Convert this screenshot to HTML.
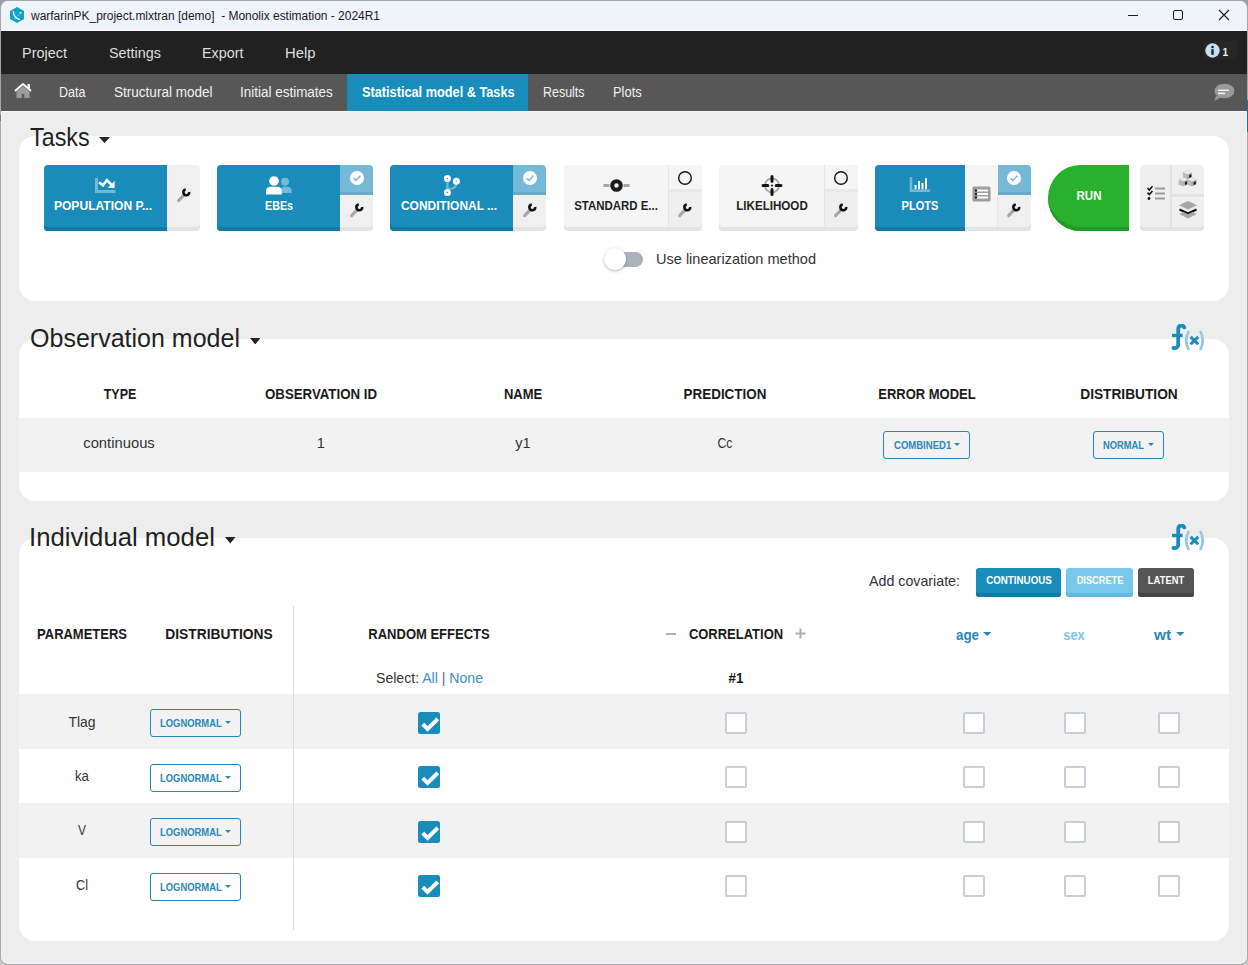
<!DOCTYPE html>
<html><head><meta charset="utf-8"><style>
html,body{margin:0;padding:0;width:1248px;height:965px;overflow:hidden;background:#a3a3ab;}
body{position:relative;font-family:"Liberation Sans",sans-serif;}
.t{position:absolute;line-height:1;white-space:nowrap;}
.r{position:absolute;display:block;}
</style></head><body>
<div class="r" style="left:0px;top:0px;width:1248px;height:40px;background:#9e9da6;"></div>
<div class="r" style="left:0px;top:40px;width:1248px;height:925px;background:#cbcbcb;"></div>
<div class="r" style="left:0px;top:0px;width:1248px;height:965px;background:#a6a6aa;border-radius:8px;"></div>
<div class="r" style="left:1px;top:1px;width:1246px;height:963px;background:#f6f6f6;border-radius:7px;"></div>
<div class="r" style="left:2px;top:2px;width:1244px;height:961px;background:#ededed;border-radius:6px;"></div>
<div class="r" style="left:1247px;top:100px;width:1px;height:32px;background:#2d63b6;"></div>
<div class="r" style="left:0px;top:115px;width:1px;height:6px;background:#6b7584;"></div>
<div class="r" style="left:1px;top:1px;width:1246px;height:30px;background:#eff3fa;border-radius:8px 8px 0 0;"></div>
<div class="r" style="left:1px;top:30px;width:1246px;height:1px;background:#fbfcfe;"></div>
<svg class="r" style="left:9px;top:6px" width="16" height="18" viewBox="0 0 16 18"><polygon points="8,1 15,5 15,13 8,17 1,13 1,5" fill="#12a2c7"/><path d="M4.3,5.2 C4.6,9.5 6,12.4 10.8,13.7" stroke="#fff" stroke-width="1.3" fill="none"/><path d="M5.5,13 L11.6,6.8" stroke="#d7f1f8" stroke-width="0.8" stroke-dasharray="1.2,0.9" fill="none"/><circle cx="11.6" cy="6.8" r="0.9" fill="#fff"/></svg>
<div class="t" style="left:30.90px;top:10.44px;font-size:12px;color:#1a1a1a;transform-origin:0 0;transform:scaleX(0.9968);">warfarinPK_project.mlxtran [demo]&nbsp; - Monolix estimation - 2024R1</div>
<div class="r" style="left:1128px;top:15px;width:10px;height:1px;background:#1a1a1a;"></div>
<div class="r" style="left:1173px;top:10px;width:10px;height:10px;border:1px solid #1a1a1a;border-radius:2px;box-sizing:border-box;"></div>
<svg class="r" style="left:1218px;top:9px" width="12" height="12" viewBox="0 0 12 12"><path d="M1,1 L11,11 M11,1 L1,11" stroke="#1a1a1a" stroke-width="1.1"/></svg>
<div class="r" style="left:1px;top:31px;width:1246px;height:43px;background:#212121;"></div>
<div class="t" style="left:21.70px;top:45.30px;font-size:15px;color:#dedede;transform-origin:0 0;transform:scaleX(0.9640);">Project</div>
<div class="t" style="left:108.60px;top:45.30px;font-size:15px;color:#dedede;transform-origin:0 0;transform:scaleX(0.9595);">Settings</div>
<div class="t" style="left:201.70px;top:45.30px;font-size:15px;color:#dedede;transform-origin:0 0;transform:scaleX(0.9573);">Export</div>
<div class="t" style="left:284.70px;top:45.30px;font-size:15px;color:#dedede;transform-origin:0 0;transform:scaleX(0.9887);">Help</div>
<div class="r" style="left:1204px;top:41px;width:33px;height:18px;background:#262626;"></div>
<svg class="r" style="left:1205px;top:43px" width="15" height="15" viewBox="0 0 15 15"><circle cx="7.5" cy="7.5" r="7.2" fill="#c4e2f3"/><circle cx="7.5" cy="4" r="1.3" fill="#222"/><rect x="6.3" y="6.2" width="2.4" height="5.6" fill="#222"/></svg>
<div class="t" style="left:1222.50px;top:47.53px;font-size:10px;font-weight:bold;color:#f2f2f2;transform-origin:0 0;">1</div>
<div class="r" style="left:1px;top:74px;width:1246px;height:37px;background:#575757;"></div>
<svg class="r" style="left:13px;top:82px" width="20" height="17" viewBox="0 0 20 17"><path d="M2,9 L10,2 L18,9" stroke="#fff" stroke-width="2" fill="none"/><rect x="14.5" y="2" width="2.5" height="5" fill="#eee"/><path d="M3.5,9.5 L10,4.2 L16.5,9.5 L16.5,16 L11.3,16 L11.3,12 L8.7,12 L8.7,16 L3.5,16 Z" fill="#9b9b9b"/></svg>
<div class="t" style="left:59.10px;top:84.75px;font-size:14px;color:#f2f2f2;transform-origin:0 0;transform:scaleX(0.8962);">Data</div>
<div class="t" style="left:113.70px;top:84.75px;font-size:14px;color:#f2f2f2;transform-origin:0 0;transform:scaleX(0.9674);">Structural model</div>
<div class="t" style="left:240.40px;top:84.75px;font-size:14px;color:#f2f2f2;transform-origin:0 0;transform:scaleX(0.9619);">Initial estimates</div>
<div class="t" style="left:542.60px;top:84.75px;font-size:14px;color:#f2f2f2;transform-origin:0 0;transform:scaleX(0.8890);">Results</div>
<div class="t" style="left:612.60px;top:84.75px;font-size:14px;color:#f2f2f2;transform-origin:0 0;transform:scaleX(0.9221);">Plots</div>
<div class="r" style="left:347px;top:74px;width:181px;height:37px;background:#198cbc;"></div>
<div class="t" style="left:361.80px;top:84.75px;font-size:14px;font-weight:bold;color:#ffffff;transform-origin:0 0;transform:scaleX(0.9095);">Statistical model &amp; Tasks</div>
<svg class="r" style="left:1213px;top:83px" width="22" height="19" viewBox="0 0 22 19"><ellipse cx="11.5" cy="8" rx="10" ry="7.3" fill="#9a9a9a"/><path d="M3,13 L1.5,18 L8,14.5 Z" fill="#9a9a9a"/><rect x="5" y="6.6" width="11" height="1.4" fill="#f4f4f4"/><rect x="5" y="9.6" width="7" height="1.6" fill="#f4f4f4"/></svg>
<div class="r" style="left:1px;top:111px;width:1245px;height:1px;background:#f8f8f8;"></div>
<div class="r" style="left:19px;top:136px;width:1210px;height:165px;background:#fff;border-radius:16px;"></div>
<div class="t" style="left:30.20px;top:124.83px;font-size:25px;color:#1f1f1f;transform-origin:0 0;transform:scaleX(0.9327);">Tasks</div>
<svg class="r" style="left:99px;top:137px" width="11" height="6" viewBox="0 0 11 6"><polygon points="0,0 11,0 5.5,6" fill="#222"/></svg>
<div class="r" style="left:44px;top:165px;width:123px;height:66px;background:#198cbc;border-radius:4px 0 0 4px;box-shadow:inset 0 -4px 0 #137aa6;"></div>
<div class="r" style="left:167px;top:165px;width:33px;height:66px;background:#f0f0f0;border-radius:0 4px 4px 0;box-shadow:inset 0 -4px 0 #e3e3e3;"></div>
<svg class="r" style="left:174.5px;top:186px" width="18" height="18" viewBox="0 0 18 18"><path d="M3.6,14.6 L8.4,9.6" stroke="#a6a6a6" stroke-width="3" stroke-linecap="round"/><circle cx="11.3" cy="6.4" r="2.9" fill="none" stroke="#111" stroke-width="2.6" stroke-dasharray="13.2 5" transform="rotate(-8 11.3 6.4)"/></svg>
<div class="t" style="left:-196.65px;width:600px;text-align:center;top:198.99px;font-size:13px;font-weight:bold;color:#fff;transform-origin:50% 0;transform:scaleX(0.9281);">POPULATION P...</div>
<svg class="r" style="left:94px;top:177px" width="22" height="17" viewBox="0 0 22 17"><path d="M2.5,1 L2.5,14.5 L21.5,14.5" stroke="#76b8d7" stroke-width="3" fill="none"/><path d="M5,5.2 L9,8.4 L12.9,3.2 L17.8,8.2" stroke="#fff" stroke-width="2.6" fill="none"/><polygon points="13.6,10.9 20.7,10.9 20.7,3.8" fill="#fff"/></svg>
<div class="r" style="left:217px;top:165px;width:123px;height:66px;background:#198cbc;border-radius:4px 0 0 4px;box-shadow:inset 0 -4px 0 #137aa6;"></div>
<div class="r" style="left:340px;top:165px;width:33px;height:30px;background:#76b8d7;border-radius:0 4px 0 0;box-shadow:inset 0 -3px 0 #6aaac8;"></div>
<svg class="r" style="left:348.5px;top:170px" width="16" height="16" viewBox="0 0 16 16"><circle cx="8" cy="8" r="7" fill="#fff"/><path d="M4.6,8.2 L7,10.4 L11.4,5.8" stroke="#76b8d7" stroke-width="1.5" fill="none"/></svg>
<div class="r" style="left:340px;top:195px;width:33px;height:36px;background:#f0f0f0;border-radius:0 0 4px 0;box-shadow:inset 0 -4px 0 #e3e3e3;"></div>
<svg class="r" style="left:347.5px;top:201px" width="18" height="18" viewBox="0 0 18 18"><path d="M3.6,14.6 L8.4,9.6" stroke="#a6a6a6" stroke-width="3" stroke-linecap="round"/><circle cx="11.3" cy="6.4" r="2.9" fill="none" stroke="#111" stroke-width="2.6" stroke-dasharray="13.2 5" transform="rotate(-8 11.3 6.4)"/></svg>
<div class="t" style="left:-21.00px;width:600px;text-align:center;top:198.99px;font-size:13px;font-weight:bold;color:#fff;transform-origin:50% 0;transform:scaleX(0.8215);">EBEs</div>
<svg class="r" style="left:264px;top:174px" width="30" height="22" viewBox="0 0 30 22"><circle cx="21" cy="7.7" r="4" fill="#76b8d7"/><path d="M17,19 L17,15.5 Q17,12.5 21,12.5 Q27.7,12.5 27.7,16.5 L27.7,19 Z" fill="#76b8d7"/><circle cx="10" cy="7" r="4.8" fill="#fff"/><path d="M2,20.4 L2,16.5 Q2,12.7 7,12.7 L13,12.7 Q17.8,12.7 17.8,16.5 L17.8,20.4 Z" fill="#fff"/></svg>
<div class="r" style="left:390px;top:165px;width:123px;height:66px;background:#198cbc;border-radius:4px 0 0 4px;box-shadow:inset 0 -4px 0 #137aa6;"></div>
<div class="r" style="left:513px;top:165px;width:33px;height:30px;background:#76b8d7;border-radius:0 4px 0 0;box-shadow:inset 0 -3px 0 #6aaac8;"></div>
<svg class="r" style="left:521.5px;top:170px" width="16" height="16" viewBox="0 0 16 16"><circle cx="8" cy="8" r="7" fill="#fff"/><path d="M4.6,8.2 L7,10.4 L11.4,5.8" stroke="#76b8d7" stroke-width="1.5" fill="none"/></svg>
<div class="r" style="left:513px;top:195px;width:33px;height:36px;background:#f0f0f0;border-radius:0 0 4px 0;box-shadow:inset 0 -4px 0 #e3e3e3;"></div>
<svg class="r" style="left:520.5px;top:201px" width="18" height="18" viewBox="0 0 18 18"><path d="M3.6,14.6 L8.4,9.6" stroke="#a6a6a6" stroke-width="3" stroke-linecap="round"/><circle cx="11.3" cy="6.4" r="2.9" fill="none" stroke="#111" stroke-width="2.6" stroke-dasharray="13.2 5" transform="rotate(-8 11.3 6.4)"/></svg>
<div class="t" style="left:148.75px;width:600px;text-align:center;top:198.99px;font-size:13px;font-weight:bold;color:#fff;transform-origin:50% 0;transform:scaleX(0.9188);">CONDITIONAL ...</div>
<svg class="r" style="left:440px;top:172px" width="22" height="26" viewBox="0 0 22 26"><path d="M7.4,9 L7.4,16.5 Q7.4,17 12,16.5 Q16.4,15.8 16.4,10" stroke="#76b8d7" stroke-width="2.2" fill="none"/><circle cx="7.4" cy="6.5" r="3.5" fill="#fff"/><circle cx="16.4" cy="9.2" r="3.5" fill="#fff"/><circle cx="7.4" cy="20.4" r="3.5" fill="#fff"/><circle cx="7.4" cy="6.5" r="0.7" fill="#4a6fd0"/><circle cx="7.4" cy="20.4" r="0.7" fill="#4a6fd0"/><circle cx="16.4" cy="9.2" r="0.7" fill="#62b9e6"/></svg>
<div class="r" style="left:564px;top:165px;width:104px;height:66px;background:#f5f5f5;border-radius:4px 0 0 4px;box-shadow:inset 0 -4px 0 #e3e3e3;"></div>
<div class="r" style="left:668px;top:165px;width:34px;height:66px;background:#efefef;border-radius:0 4px 4px 0;box-shadow:inset 0 -4px 0 #e3e3e3;"></div>
<div class="r" style="left:668px;top:165px;width:34px;height:27px;background:#f5f5f5;border-radius:0 4px 0 0;box-shadow:inset 0 -3px 0 #e9e9e9;"></div>
<div class="r" style="left:668px;top:165px;width:1px;height:62px;background:#e6e6e6;"></div>
<svg class="r" style="left:677.0px;top:169.6px" width="16" height="16" viewBox="0 0 16 16"><circle cx="8" cy="8" r="6.3" fill="none" stroke="#151515" stroke-width="1.4"/></svg>
<svg class="r" style="left:676.0px;top:201px" width="18" height="18" viewBox="0 0 18 18"><path d="M3.6,14.6 L8.4,9.6" stroke="#a6a6a6" stroke-width="3" stroke-linecap="round"/><circle cx="11.3" cy="6.4" r="2.9" fill="none" stroke="#111" stroke-width="2.6" stroke-dasharray="13.2 5" transform="rotate(-8 11.3 6.4)"/></svg>
<div class="t" style="left:316.35px;width:600px;text-align:center;top:198.99px;font-size:13px;font-weight:bold;color:#1f1f1f;transform-origin:50% 0;transform:scaleX(0.8802);">STANDARD E...</div>
<svg class="r" style="left:603px;top:178px" width="27" height="15" viewBox="0 0 27 15"><rect x="0.5" y="6" width="6" height="3" fill="#a3a3a3"/><rect x="20.5" y="6" width="6" height="3" fill="#a3a3a3"/><circle cx="13.5" cy="7.5" r="6.3" fill="#1b1b1b"/><circle cx="13.5" cy="7.5" r="2.2" fill="#f5f5f5"/></svg>
<div class="r" style="left:719px;top:165px;width:105px;height:66px;background:#f5f5f5;border-radius:4px 0 0 4px;box-shadow:inset 0 -4px 0 #e3e3e3;"></div>
<div class="r" style="left:824px;top:165px;width:34px;height:66px;background:#efefef;border-radius:0 4px 4px 0;box-shadow:inset 0 -4px 0 #e3e3e3;"></div>
<div class="r" style="left:824px;top:165px;width:34px;height:27px;background:#f5f5f5;border-radius:0 4px 0 0;box-shadow:inset 0 -3px 0 #e9e9e9;"></div>
<div class="r" style="left:824px;top:165px;width:1px;height:62px;background:#e6e6e6;"></div>
<svg class="r" style="left:833.0px;top:169.6px" width="16" height="16" viewBox="0 0 16 16"><circle cx="8" cy="8" r="6.3" fill="none" stroke="#151515" stroke-width="1.4"/></svg>
<svg class="r" style="left:832.0px;top:201px" width="18" height="18" viewBox="0 0 18 18"><path d="M3.6,14.6 L8.4,9.6" stroke="#a6a6a6" stroke-width="3" stroke-linecap="round"/><circle cx="11.3" cy="6.4" r="2.9" fill="none" stroke="#111" stroke-width="2.6" stroke-dasharray="13.2 5" transform="rotate(-8 11.3 6.4)"/></svg>
<div class="t" style="left:472.20px;width:600px;text-align:center;top:198.99px;font-size:13px;font-weight:bold;color:#1f1f1f;transform-origin:50% 0;transform:scaleX(0.8932);">LIKELIHOOD</div>
<svg class="r" style="left:760px;top:173px" width="24" height="25" viewBox="0 0 24 25"><circle cx="12" cy="12.4" r="7" fill="none" stroke="#a6a6a6" stroke-width="1.9"/><path d="M12,3.4 L12,8.2 M12,16.6 L12,21.6 M3,12.4 L7.8,12.4 M16.2,12.4 L21,12.4" stroke="#111" stroke-width="3" stroke-linecap="round"/><circle cx="12" cy="12.4" r="1" fill="#111"/></svg>
<div class="r" style="left:875px;top:165px;width:90px;height:66px;background:#198cbc;border-radius:4px 0 0 4px;box-shadow:inset 0 -4px 0 #137aa6;"></div>
<div class="r" style="left:965px;top:165px;width:33px;height:66px;background:#f5f5f5;box-shadow:inset 0 -4px 0 #e3e3e3;"></div>
<div class="r" style="left:998px;top:165px;width:33px;height:30px;background:#76b8d7;border-radius:0 4px 0 0;box-shadow:inset 0 -3px 0 #6aaac8;"></div>
<div class="r" style="left:998px;top:195px;width:33px;height:36px;background:#f0f0f0;border-radius:0 0 4px 0;box-shadow:inset 0 -4px 0 #e3e3e3;"></div>
<div class="r" style="left:997px;top:195px;width:1px;height:32px;background:#e6e6e6;"></div>
<svg class="r" style="left:1006px;top:170px" width="16" height="16" viewBox="0 0 16 16"><circle cx="8" cy="8" r="7" fill="#fff"/><path d="M4.6,8.2 L7,10.4 L11.4,5.8" stroke="#76b8d7" stroke-width="1.5" fill="none"/></svg>
<svg class="r" style="left:1005px;top:201px" width="18" height="18" viewBox="0 0 18 18"><path d="M3.6,14.6 L8.4,9.6" stroke="#a6a6a6" stroke-width="3" stroke-linecap="round"/><circle cx="11.3" cy="6.4" r="2.9" fill="none" stroke="#111" stroke-width="2.6" stroke-dasharray="13.2 5" transform="rotate(-8 11.3 6.4)"/></svg>
<div class="t" style="left:620.40px;width:600px;text-align:center;top:198.99px;font-size:13px;font-weight:bold;color:#fff;transform-origin:50% 0;transform:scaleX(0.8492);">PLOTS</div>
<svg class="r" style="left:908px;top:176px" width="24" height="18" viewBox="0 0 24 18"><path d="M3,1 L3,14.8 L22,14.8" stroke="#76b8d7" stroke-width="2.6" fill="none"/><rect x="6.5" y="9" width="2" height="4.3" fill="#fff"/><rect x="10" y="5" width="2" height="8.3" fill="#fff"/><rect x="13.5" y="7" width="2" height="6.3" fill="#fff"/><rect x="17" y="2.2" width="2" height="11.1" fill="#fff"/></svg>
<svg class="r" style="left:972px;top:186px" width="19" height="16" viewBox="0 0 19 16"><rect x="0.5" y="0.5" width="18" height="15" rx="1.5" fill="#9c9c9c"/><rect x="4" y="3.5" width="12" height="2" fill="#fff"/><rect x="4" y="7" width="12" height="2" fill="#fff"/><rect x="4" y="10.5" width="12" height="2" fill="#fff"/><circle cx="4" cy="4.5" r="1.2" fill="#222"/><circle cx="4" cy="8" r="1.2" fill="#222"/><circle cx="4" cy="11.5" r="1.2" fill="#222"/></svg>
<div class="r" style="left:1048px;top:165px;width:81px;height:66px;background:#29b12e;border-radius:32px 0 0 32px / 33px 0 0 33px;box-shadow:inset 0 -4px 0 #219b27;"></div>
<div class="t" style="left:789.00px;width:600px;text-align:center;top:190.02px;font-size:12.5px;font-weight:bold;color:#fff;transform-origin:50% 0;transform:scaleX(0.9231);">RUN</div>
<div class="r" style="left:1140px;top:165px;width:64px;height:66px;background:#efefef;border-radius:4px;box-shadow:inset 0 -4px 0 #e3e3e3;"></div>
<div class="r" style="left:1170px;top:165px;width:2px;height:62px;background:#e2e2e2;"></div>
<div class="r" style="left:1172px;top:194px;width:32px;height:3px;background:#e2e2e2;"></div>
<svg class="r" style="left:1146px;top:185px" width="20" height="18" viewBox="0 0 20 18"><path d="M1.5,3 L3.3,5 L6.5,1.3 M1.5,7.6 L3.3,9.6 L6.5,5.9" stroke="#151515" stroke-width="1.6" fill="none"/><circle cx="3" cy="13.5" r="1.4" fill="#151515"/><rect x="9" y="2.5" width="10" height="2" fill="#9b9b9b"/><rect x="9" y="7.5" width="10" height="2" fill="#9b9b9b"/><rect x="9" y="12.5" width="10" height="2" fill="#9b9b9b"/></svg>
<svg class="r" style="left:1178px;top:169px" width="20" height="19" viewBox="0 0 20 19"><g transform="translate(5,1.3)"><path d="M0,2.2 L4.5,0 L9,2.2 L9,7.3 L4.5,9 L0,7.3 Z" fill="#a9a9a9"/><path d="M0,2.2 L4.5,0 L9,2.2 L4.5,4.2 Z" fill="#ebebeb"/><path d="M0,2.2 L4.5,4.2 L4.5,9 L0,7.3 Z" fill="#b9b9b9"/><path d="M6.2,5 L8.3,4 L8.3,6.8 L6.2,7.8 Z" fill="#151515"/></g><g transform="translate(0.8,8.2)"><path d="M0,2.2 L4.5,0 L9,2.2 L9,7.3 L4.5,9 L0,7.3 Z" fill="#a9a9a9"/><path d="M0,2.2 L4.5,0 L9,2.2 L4.5,4.2 Z" fill="#ebebeb"/><path d="M0,2.2 L4.5,4.2 L4.5,9 L0,7.3 Z" fill="#b9b9b9"/><path d="M6.2,5 L8.3,4 L8.3,6.8 L6.2,7.8 Z" fill="#151515"/></g><g transform="translate(9.5,8.2)"><path d="M0,2.2 L4.5,0 L9,2.2 L9,7.3 L4.5,9 L0,7.3 Z" fill="#a9a9a9"/><path d="M0,2.2 L4.5,0 L9,2.2 L4.5,4.2 Z" fill="#ebebeb"/><path d="M0,2.2 L4.5,4.2 L4.5,9 L0,7.3 Z" fill="#b9b9b9"/><path d="M6.2,5 L8.3,4 L8.3,6.8 L6.2,7.8 Z" fill="#151515"/></g></svg>
<svg class="r" style="left:1178px;top:200px" width="20" height="20" viewBox="0 0 20 20"><polygon points="10,1 19,5.3 10,9.6 1,5.3" fill="#a5a5a5"/><path d="M1.5,9.4 L10,13.6 L18.5,9.4" stroke="#151515" stroke-width="2.2" fill="none"/><polygon points="1,14 10,18.6 19,14 14.5,12 10,14.2 5.5,12" fill="#a8a8a8"/></svg>
<div class="r" style="left:608px;top:252px;width:35px;height:15px;background:#aab2bb;border-radius:8px;"></div>
<div class="r" style="left:604px;top:248px;width:22px;height:22px;background:#fff;border-radius:50%;box-shadow:0 1px 3px rgba(0,0,0,0.3);"></div>
<div class="t" style="left:656.30px;top:252.47px;font-size:14.8px;color:#333;transform-origin:0 0;transform:scaleX(0.9823);">Use linearization method</div>
<div class="r" style="left:19px;top:339px;width:1210px;height:162px;background:#fff;border-radius:16px;"></div>
<div class="t" style="left:30.20px;top:326.03px;font-size:25px;color:#1f1f1f;transform-origin:0 0;transform:scaleX(1.0009);">Observation model</div>
<svg class="r" style="left:249.6px;top:337.6px" width="10.5" height="6.5" viewBox="0 0 10.5 6.5"><polygon points="0,0 10.5,0 5.25,6.5" fill="#222"/></svg>
<svg class="r" style="left:1171px;top:323.5px" width="38" height="30" viewBox="0 0 38 30"><path d="M13.2,3.4 Q12.6,1.6 10.4,1.6 Q7.2,1.6 7.2,5.8 L7.2,20.2 Q7.2,24.4 2.4,24" stroke="#198cbc" stroke-width="3.8" fill="none" stroke-linecap="round"/><rect x="1" y="9.8" width="10.6" height="3.3" fill="#198cbc"/><path d="M17.4,8 Q12.9,16.6 17.4,25.2 M29.6,8 Q34.1,16.6 29.6,25.2" stroke="#93c8e0" stroke-width="2.6" fill="none" stroke-linecap="round"/><path d="M19.6,12.9 L27.2,20.3 M27.2,12.9 L19.6,20.3" stroke="#198cbc" stroke-width="3"/></svg>
<div class="t" style="left:-180.40px;width:600px;text-align:center;top:387.09px;font-size:14.3px;font-weight:bold;color:#1a1a1a;transform-origin:50% 0;transform:scaleX(0.8728);">TYPE</div>
<div class="t" style="left:21.35px;width:600px;text-align:center;top:387.09px;font-size:14.3px;font-weight:bold;color:#1a1a1a;transform-origin:50% 0;transform:scaleX(0.9274);">OBSERVATION ID</div>
<div class="t" style="left:223.10px;width:600px;text-align:center;top:387.09px;font-size:14.3px;font-weight:bold;color:#1a1a1a;transform-origin:50% 0;transform:scaleX(0.9073);">NAME</div>
<div class="t" style="left:424.90px;width:600px;text-align:center;top:387.09px;font-size:14.3px;font-weight:bold;color:#1a1a1a;transform-origin:50% 0;transform:scaleX(0.9389);">PREDICTION</div>
<div class="t" style="left:626.65px;width:600px;text-align:center;top:387.09px;font-size:14.3px;font-weight:bold;color:#1a1a1a;transform-origin:50% 0;transform:scaleX(0.9091);">ERROR MODEL</div>
<div class="t" style="left:828.55px;width:600px;text-align:center;top:387.09px;font-size:14.3px;font-weight:bold;color:#1a1a1a;transform-origin:50% 0;transform:scaleX(0.9589);">DISTRIBUTION</div>
<div class="r" style="left:19px;top:418px;width:1210px;height:54px;background:#f2f2f2;"></div>
<div class="t" style="left:-180.55px;width:600px;text-align:center;top:436.14px;font-size:14.6px;color:#333;transform-origin:50% 0;transform:scaleX(1.0125);">continuous</div>
<div class="t" style="left:20.80px;width:600px;text-align:center;top:436.14px;font-size:14.6px;color:#333;transform-origin:50% 0;">1</div>
<div class="t" style="left:222.90px;width:600px;text-align:center;top:436.14px;font-size:14.6px;color:#333;transform-origin:50% 0;">y1</div>
<div class="t" style="left:425.10px;width:600px;text-align:center;top:436.24px;font-size:14.6px;color:#333;transform-origin:50% 0;transform:scaleX(0.8406);">Cc</div>
<div class="r" style="left:883px;top:431px;width:87px;height:28px;border:1px solid #2586b5;border-radius:3px;box-sizing:border-box;"></div>
<div class="t" style="left:893.70px;top:441.13px;font-size:10px;font-weight:bold;color:#2a88b6;transform-origin:0 0;transform:scaleX(0.9533);">COMBINED1</div>
<svg class="r" style="left:954px;top:443px" width="6" height="3" viewBox="0 0 6 3"><polygon points="0,0 6,0 3.0,3" fill="#2a88b6"/></svg>
<div class="r" style="left:1093px;top:431px;width:71px;height:28px;border:1px solid #2586b5;border-radius:3px;box-sizing:border-box;"></div>
<div class="t" style="left:1103.00px;top:441.13px;font-size:10px;font-weight:bold;color:#2a88b6;transform-origin:0 0;transform:scaleX(0.9343);">NORMAL</div>
<svg class="r" style="left:1148px;top:443px" width="6" height="3" viewBox="0 0 6 3"><polygon points="0,0 6,0 3.0,3" fill="#2a88b6"/></svg>
<div class="r" style="left:19px;top:538px;width:1210px;height:403px;background:#fff;border-radius:16px;"></div>
<div class="t" style="left:28.60px;top:524.87px;font-size:25.9px;color:#1f1f1f;transform-origin:0 0;transform:scaleX(0.9938);">Individual model</div>
<svg class="r" style="left:225px;top:537px" width="10.5" height="6.5" viewBox="0 0 10.5 6.5"><polygon points="0,0 10.5,0 5.25,6.5" fill="#222"/></svg>
<svg class="r" style="left:1171px;top:524px" width="38" height="30" viewBox="0 0 38 30"><path d="M13.2,3.4 Q12.6,1.6 10.4,1.6 Q7.2,1.6 7.2,5.8 L7.2,20.2 Q7.2,24.4 2.4,24" stroke="#198cbc" stroke-width="3.8" fill="none" stroke-linecap="round"/><rect x="1" y="9.8" width="10.6" height="3.3" fill="#198cbc"/><path d="M17.4,8 Q12.9,16.6 17.4,25.2 M29.6,8 Q34.1,16.6 29.6,25.2" stroke="#93c8e0" stroke-width="2.6" fill="none" stroke-linecap="round"/><path d="M19.6,12.9 L27.2,20.3 M27.2,12.9 L19.6,20.3" stroke="#198cbc" stroke-width="3"/></svg>
<div class="t" style="left:868.70px;top:573.64px;font-size:14.6px;color:#333;transform-origin:0 0;transform:scaleX(0.9751);">Add covariate:</div>
<div class="r" style="left:976px;top:568px;width:85px;height:29px;background:#198cbc;border-radius:3px;box-shadow:inset 0 -4px 0 #137aa6;"></div>
<div class="t" style="left:718.80px;width:600px;text-align:center;top:575.11px;font-size:10.5px;font-weight:bold;color:#fff;transform-origin:50% 0;transform:scaleX(0.9308);">CONTINUOUS</div>
<div class="r" style="left:1066px;top:568px;width:67px;height:29px;background:#78c8eb;border-radius:3px;box-shadow:inset 0 -4px 0 #62bbe5;"></div>
<div class="t" style="left:799.70px;width:600px;text-align:center;top:575.11px;font-size:10.5px;font-weight:bold;color:#ffffff;transform-origin:50% 0;transform:scaleX(0.8796);">DISCRETE</div>
<div class="r" style="left:1138px;top:568px;width:56px;height:29px;background:#555555;border-radius:3px;box-shadow:inset 0 -4px 0 #454545;"></div>
<div class="t" style="left:865.85px;width:600px;text-align:center;top:575.11px;font-size:10.5px;font-weight:bold;color:#fff;transform-origin:50% 0;transform:scaleX(0.8934);">LATENT</div>
<div class="t" style="left:-218.30px;width:600px;text-align:center;top:626.89px;font-size:14.3px;font-weight:bold;color:#1a1a1a;transform-origin:50% 0;transform:scaleX(0.9066);">PARAMETERS</div>
<div class="t" style="left:-81.30px;width:600px;text-align:center;top:626.89px;font-size:14.3px;font-weight:bold;color:#1a1a1a;transform-origin:50% 0;transform:scaleX(0.9656);">DISTRIBUTIONS</div>
<div class="t" style="left:129.30px;width:600px;text-align:center;top:626.89px;font-size:14.3px;font-weight:bold;color:#1a1a1a;transform-origin:50% 0;transform:scaleX(0.9096);">RANDOM EFFECTS</div>
<div class="r" style="left:666px;top:633px;width:10px;height:2px;background:#b0b0b0;"></div>
<div class="t" style="left:436.10px;width:600px;text-align:center;top:626.89px;font-size:14.3px;font-weight:bold;color:#1a1a1a;transform-origin:50% 0;transform:scaleX(0.9075);">CORRELATION</div>
<svg class="r" style="left:795px;top:628px" width="11" height="11" viewBox="0 0 11 11"><path d="M5.5,0.5 L5.5,10.5 M0.5,5.5 L10.5,5.5" stroke="#b0b0b0" stroke-width="2"/></svg>
<div class="t" style="left:956.00px;top:627.89px;font-size:14.3px;font-weight:bold;color:#2a88b6;transform-origin:0 0;transform:scaleX(0.9335);">age</div>
<svg class="r" style="left:983px;top:632px" width="8.5" height="4" viewBox="0 0 8.5 4"><polygon points="0,0 8.5,0 4.25,4" fill="#2a88b6"/></svg>
<div class="t" style="left:774.40px;width:600px;text-align:center;top:627.89px;font-size:14.3px;font-weight:bold;color:#7cc3e8;transform-origin:50% 0;transform:scaleX(0.9054);">sex</div>
<div class="t" style="left:1154.00px;top:627.89px;font-size:14.3px;font-weight:bold;color:#2a88b6;transform-origin:0 0;transform:scaleX(1.0702);">wt</div>
<svg class="r" style="left:1175.5px;top:632px" width="8.5" height="4" viewBox="0 0 8.5 4"><polygon points="0,0 8.5,0 4.25,4" fill="#2a88b6"/></svg>
<div class="t" style="left:375.80px;top:671.02px;font-size:14.5px;color:#333;transform-origin:0 0;transform:scaleX(0.9713);">Select: <span style="color:#3d8fc4">All</span> <span style="color:#666">|</span> <span style="color:#3d8fc4">None</span></div>
<div class="t" style="left:435.90px;width:600px;text-align:center;top:671.45px;font-size:14px;font-weight:bold;color:#1a1a1a;transform-origin:50% 0;transform:scaleX(0.9634);">#1</div>
<div class="r" style="left:19px;top:694px;width:1210px;height:55px;background:#f2f2f2;"></div>
<div class="r" style="left:19px;top:803px;width:1210px;height:55px;background:#f2f2f2;"></div>
<div class="t" style="left:-218.30px;width:600px;text-align:center;top:714.64px;font-size:14.6px;color:#333;transform-origin:50% 0;transform:scaleX(0.9507);">Tlag</div>
<div class="r" style="left:150px;top:709px;width:91px;height:28px;border:1px solid #2586b5;border-radius:3px;box-sizing:border-box;"></div>
<div class="t" style="left:160.30px;top:719.33px;font-size:10px;font-weight:bold;color:#2a88b6;transform-origin:0 0;transform:scaleX(0.9413);">LOGNORMAL</div>
<svg class="r" style="left:225px;top:721px" width="6" height="3" viewBox="0 0 6 3"><polygon points="0,0 6,0 3.0,3" fill="#2a88b6"/></svg>
<svg class="r" style="left:418px;top:712px" width="22" height="22" viewBox="0 0 22 22"><rect x="0" y="0" width="22" height="22" rx="2.5" fill="#198cbc"/><path d="M4.8,12.2 L9.6,17 L19.8,6.8" stroke="#fff" stroke-width="4" fill="none"/></svg>
<div class="r" style="left:725px;top:712px;width:22px;height:22px;background:#fff;border:2px solid #c9cfd8;border-radius:2px;box-sizing:border-box;"></div>
<div class="r" style="left:963px;top:712px;width:22px;height:22px;background:#fff;border:2px solid #c9cfd8;border-radius:2px;box-sizing:border-box;"></div>
<div class="r" style="left:1064px;top:712px;width:22px;height:22px;background:#fff;border:2px solid #c9cfd8;border-radius:2px;box-sizing:border-box;"></div>
<div class="r" style="left:1158px;top:712px;width:22px;height:22px;background:#fff;border:2px solid #c9cfd8;border-radius:2px;box-sizing:border-box;"></div>
<div class="t" style="left:-218.30px;width:600px;text-align:center;top:768.94px;font-size:14.6px;color:#333;transform-origin:50% 0;transform:scaleX(0.9080);">ka</div>
<div class="r" style="left:150px;top:764px;width:91px;height:28px;border:1px solid #2586b5;border-radius:3px;box-sizing:border-box;"></div>
<div class="t" style="left:160.30px;top:774.33px;font-size:10px;font-weight:bold;color:#2a88b6;transform-origin:0 0;transform:scaleX(0.9413);">LOGNORMAL</div>
<svg class="r" style="left:225px;top:776px" width="6" height="3" viewBox="0 0 6 3"><polygon points="0,0 6,0 3.0,3" fill="#2a88b6"/></svg>
<svg class="r" style="left:418px;top:766px" width="22" height="22" viewBox="0 0 22 22"><rect x="0" y="0" width="22" height="22" rx="2.5" fill="#198cbc"/><path d="M4.8,12.2 L9.6,17 L19.8,6.8" stroke="#fff" stroke-width="4" fill="none"/></svg>
<div class="r" style="left:725px;top:766px;width:22px;height:22px;background:#fff;border:2px solid #c9cfd8;border-radius:2px;box-sizing:border-box;"></div>
<div class="r" style="left:963px;top:766px;width:22px;height:22px;background:#fff;border:2px solid #c9cfd8;border-radius:2px;box-sizing:border-box;"></div>
<div class="r" style="left:1064px;top:766px;width:22px;height:22px;background:#fff;border:2px solid #c9cfd8;border-radius:2px;box-sizing:border-box;"></div>
<div class="r" style="left:1158px;top:766px;width:22px;height:22px;background:#fff;border:2px solid #c9cfd8;border-radius:2px;box-sizing:border-box;"></div>
<div class="t" style="left:-218.30px;width:600px;text-align:center;top:823.44px;font-size:14.6px;color:#333;transform-origin:50% 0;transform:scaleX(0.8215);">V</div>
<div class="r" style="left:150px;top:818px;width:91px;height:28px;border:1px solid #2586b5;border-radius:3px;box-sizing:border-box;"></div>
<div class="t" style="left:160.30px;top:828.33px;font-size:10px;font-weight:bold;color:#2a88b6;transform-origin:0 0;transform:scaleX(0.9413);">LOGNORMAL</div>
<svg class="r" style="left:225px;top:830px" width="6" height="3" viewBox="0 0 6 3"><polygon points="0,0 6,0 3.0,3" fill="#2a88b6"/></svg>
<svg class="r" style="left:418px;top:821px" width="22" height="22" viewBox="0 0 22 22"><rect x="0" y="0" width="22" height="22" rx="2.5" fill="#198cbc"/><path d="M4.8,12.2 L9.6,17 L19.8,6.8" stroke="#fff" stroke-width="4" fill="none"/></svg>
<div class="r" style="left:725px;top:821px;width:22px;height:22px;background:#fff;border:2px solid #c9cfd8;border-radius:2px;box-sizing:border-box;"></div>
<div class="r" style="left:963px;top:821px;width:22px;height:22px;background:#fff;border:2px solid #c9cfd8;border-radius:2px;box-sizing:border-box;"></div>
<div class="r" style="left:1064px;top:821px;width:22px;height:22px;background:#fff;border:2px solid #c9cfd8;border-radius:2px;box-sizing:border-box;"></div>
<div class="r" style="left:1158px;top:821px;width:22px;height:22px;background:#fff;border:2px solid #c9cfd8;border-radius:2px;box-sizing:border-box;"></div>
<div class="t" style="left:-218.30px;width:600px;text-align:center;top:877.64px;font-size:14.6px;color:#333;transform-origin:50% 0;transform:scaleX(0.8703);">Cl</div>
<div class="r" style="left:150px;top:873px;width:91px;height:28px;border:1px solid #2586b5;border-radius:3px;box-sizing:border-box;"></div>
<div class="t" style="left:160.30px;top:883.33px;font-size:10px;font-weight:bold;color:#2a88b6;transform-origin:0 0;transform:scaleX(0.9413);">LOGNORMAL</div>
<svg class="r" style="left:225px;top:885px" width="6" height="3" viewBox="0 0 6 3"><polygon points="0,0 6,0 3.0,3" fill="#2a88b6"/></svg>
<svg class="r" style="left:418px;top:875px" width="22" height="22" viewBox="0 0 22 22"><rect x="0" y="0" width="22" height="22" rx="2.5" fill="#198cbc"/><path d="M4.8,12.2 L9.6,17 L19.8,6.8" stroke="#fff" stroke-width="4" fill="none"/></svg>
<div class="r" style="left:725px;top:875px;width:22px;height:22px;background:#fff;border:2px solid #c9cfd8;border-radius:2px;box-sizing:border-box;"></div>
<div class="r" style="left:963px;top:875px;width:22px;height:22px;background:#fff;border:2px solid #c9cfd8;border-radius:2px;box-sizing:border-box;"></div>
<div class="r" style="left:1064px;top:875px;width:22px;height:22px;background:#fff;border:2px solid #c9cfd8;border-radius:2px;box-sizing:border-box;"></div>
<div class="r" style="left:1158px;top:875px;width:22px;height:22px;background:#fff;border:2px solid #c9cfd8;border-radius:2px;box-sizing:border-box;"></div>
<div class="r" style="left:293px;top:606px;width:1px;height:324px;background:#dedede;"></div>
</body></html>
